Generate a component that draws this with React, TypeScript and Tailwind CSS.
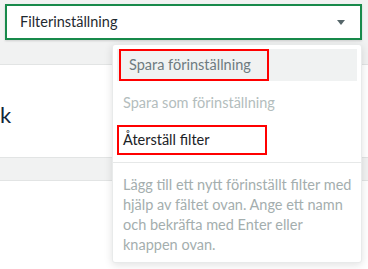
import React from 'react';

const font = { fontFamily: 'Lato, "Noto Sans", sans-serif' };

export default function App() {
  return (
    <div
      className="relative w-[368px] h-[269px] overflow-hidden bg-[#f1f2f2] text-[14.5px]"
      style={font}
    >
      {/* Select */}
      <div className="pt-[4px] pl-[5px] pr-[6px]">
        <div className="flex items-center justify-between h-[36px] bg-white border-2 border-[#188a4b] pl-[13px] pr-[15px] shadow-[0_1px_2px_rgba(0,0,0,0.15)]">
          <span className="text-[#1f2a30]">Filterinställning</span>
          <svg width="8" height="5" viewBox="0 0 8 5" className="mt-[1px]">
            <path d="M0 0h8L4 5z" fill="#56666a" />
          </svg>
        </div>
      </div>

      {/* Page behind */}
      <div className="h-[24px]" />
      <div className="h-[94px] bg-white border-y border-[#e2e4e4] flex items-center">
        <span className="text-[22px] text-[#12253a] mt-[6px]">k</span>
      </div>
      <div className="h-[22px]" />
      <div className="h-[100px] bg-white border-t border-[#e2e4e4]" />

      {/* Dropdown */}
      <div className="absolute left-[112px] top-[44px] w-[250px] h-[219px] bg-white rounded-[3px] border border-[#e8eaea] shadow-[0_2px_8px_rgba(0,0,0,0.12)]">
        <div className="px-[4px] pt-[4px]">
          <div className="h-[32px] bg-[#f0f2f2] flex items-center pl-[12px] text-[#6d7b80]">
            Spara förinställning
          </div>
        </div>
        <div className="mt-[6px] h-[32px] flex items-center px-[10px] text-[#b3bdbd]">
          Spara som förinställning
        </div>
        <div className="mt-[5px] h-[32px] flex items-center px-[10px] text-[#1b2226]">
          Återställ filter
        </div>
        <div className="mt-[6px] border-t border-[#e6e8e8]" />
        <p className="pt-[12px] px-[10px] leading-[20px] text-[#a4aeae] whitespace-nowrap">
          Lägg till ett nytt förinställt filter med
          <br />
          hjälp av fältet ovan. Ange ett namn
          <br />
          och bekräfta med Enter eller
          <br />
          knappen ovan.
        </p>

        {/* Annotations */}
        <div className="absolute left-[6px] top-[4px] w-[150px] h-[32px] border-2 border-[#ff0000]" />
        <div className="absolute left-[4px] top-[80px] w-[150px] h-[30px] border-2 border-[#ff0000]" />
      </div>
    </div>
  );
}
